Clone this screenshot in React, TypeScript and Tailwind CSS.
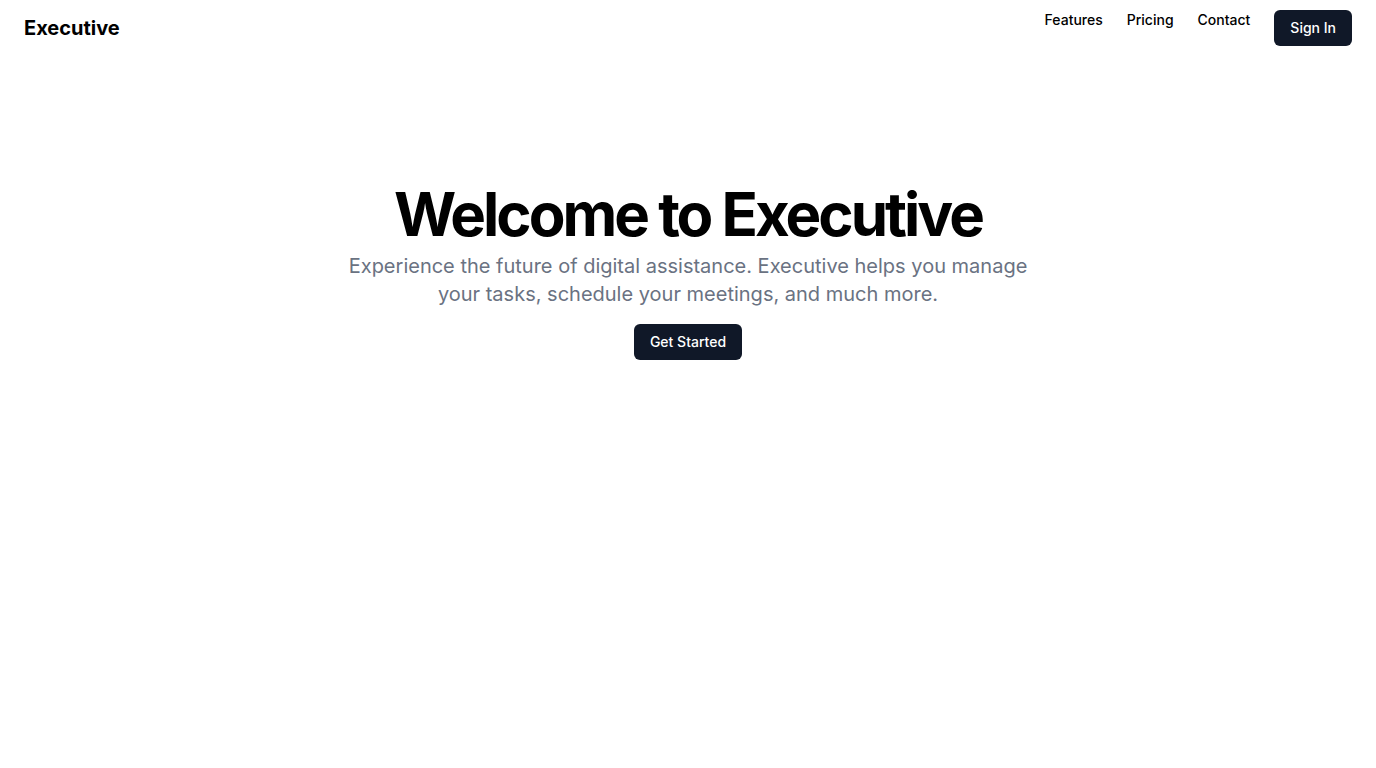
export default function App() {
  return (
    <div className="flex min-h-screen flex-col bg-white font-['Inter',sans-serif] text-black">
      <header className="flex h-14 items-center px-6">
        <a href="#" className="text-xl font-bold text-black">
          Executive
        </a>
        <nav className="ml-auto flex gap-6">
          <a href="#" className="text-sm font-medium text-black">
            Features
          </a>
          <a href="#" className="text-sm font-medium text-black">
            Pricing
          </a>
          <a href="#" className="text-sm font-medium text-black">
            Contact
          </a>
          <button className="rounded-md bg-gray-900 px-4 py-2 text-sm font-medium text-white">
            Sign In
          </button>
        </nav>
      </header>
      <main className="flex-1">
        <section className="w-full py-32">
          <div className="container mx-auto px-4">
            <div className="flex flex-col items-center space-y-4 text-center">
              <div className="space-y-2">
                <h1 className="text-6xl/none font-bold tracking-tighter">
                  Welcome to Executive
                </h1>
                <p className="mx-auto max-w-[700px] text-xl text-gray-500">
                  Experience the future of digital assistance. Executive helps you
                  manage your tasks, schedule your meetings, and much more.
                </p>
              </div>
              <button className="rounded-md bg-gray-900 px-4 py-2 text-sm font-medium text-white">
                Get Started
              </button>
            </div>
          </div>
        </section>
      </main>
    </div>
  );
}
